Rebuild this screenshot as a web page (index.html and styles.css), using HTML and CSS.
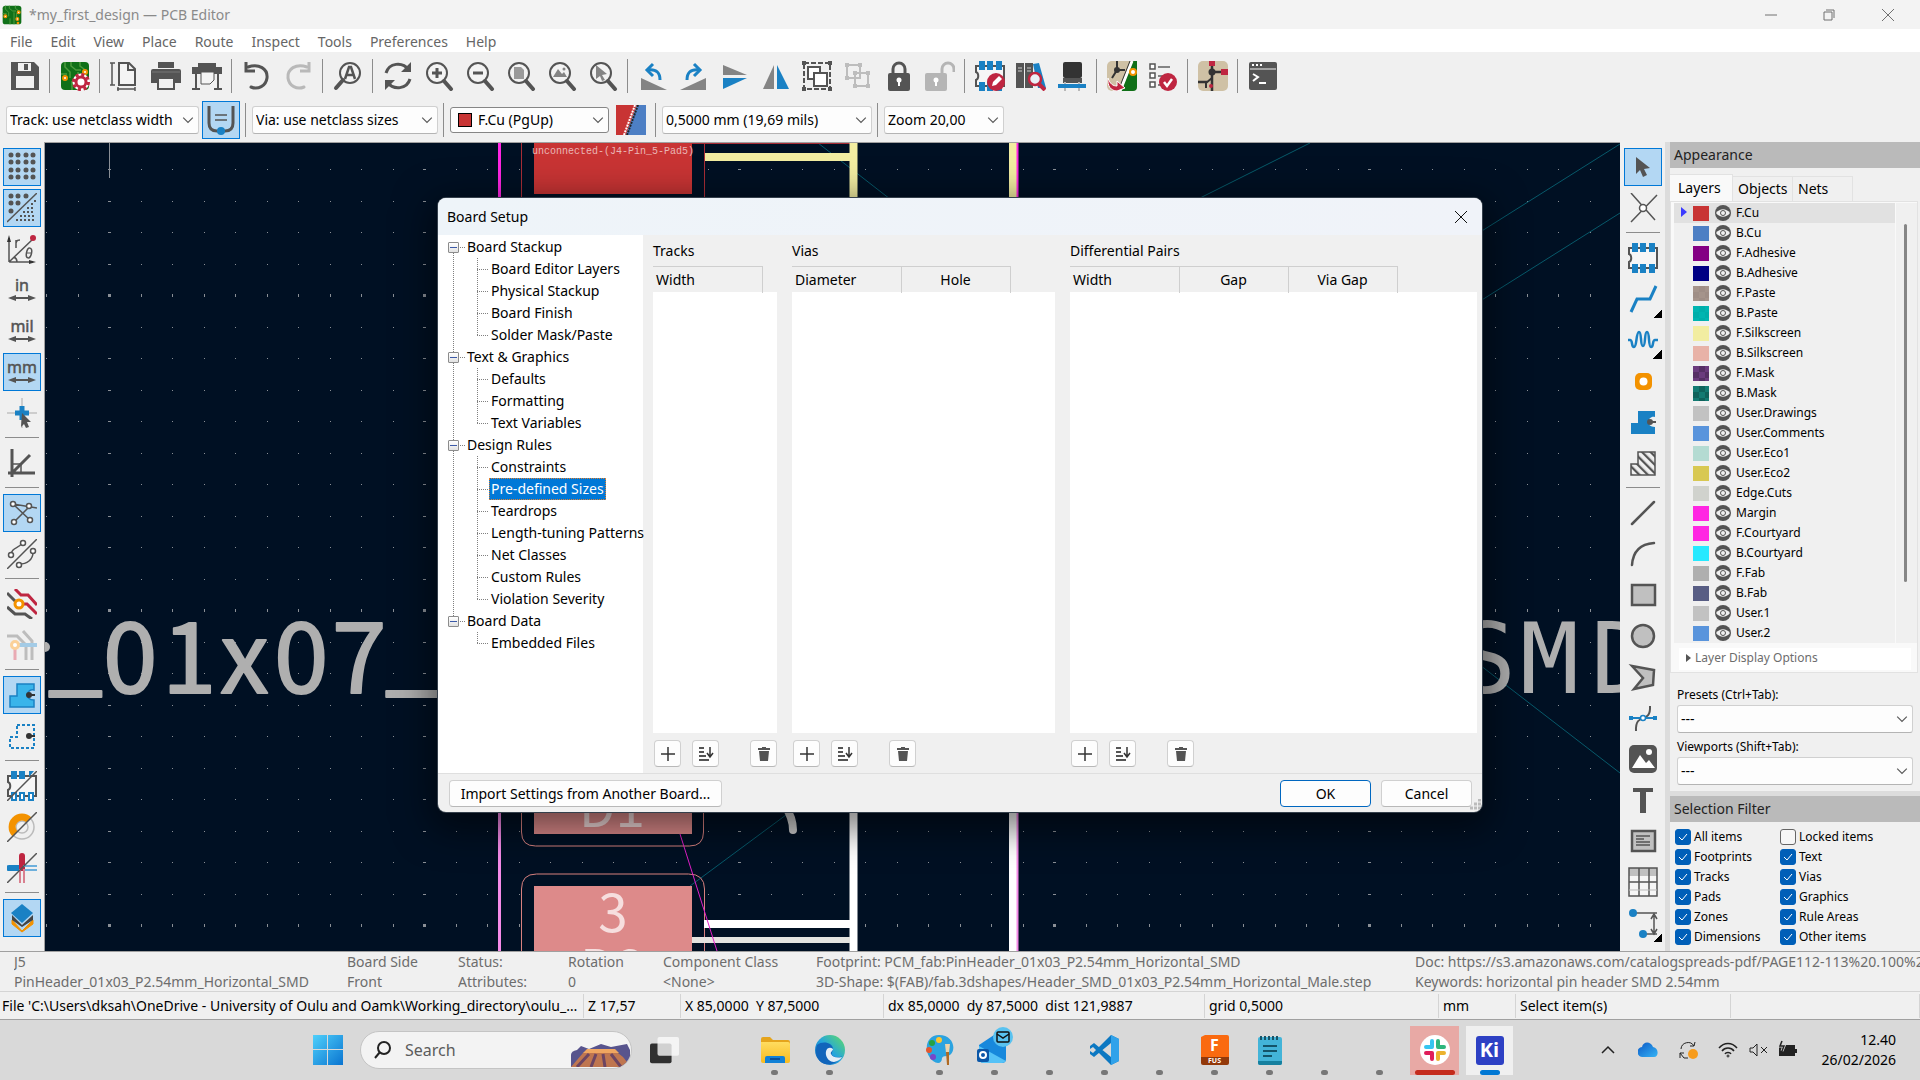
FILE: index.html
```html
<!DOCTYPE html>
<html lang="en">
<head>
<meta charset="utf-8">
<title>*my_first_design — PCB Editor</title>
<link rel="stylesheet" href="styles.css">
</head>
<body>
<svg class="sprite" aria-hidden="true">
<defs>
<linearGradient id="g-win" x1="0" y1="0" x2="1" y2="1"><stop offset="0" stop-color="#4fd0fb"/><stop offset="1" stop-color="#0a74d0"/></linearGradient>
<linearGradient id="g-folder" x1="0" y1="0" x2="0" y2="1"><stop offset="0" stop-color="#ffdc60"/><stop offset="1" stop-color="#f9bb1e"/></linearGradient>
<linearGradient id="g-edge" x1="0" y1="1" x2="1" y2="0"><stop offset="0" stop-color="#0b5cb8"/><stop offset=".5" stop-color="#25a5dc"/><stop offset="1" stop-color="#62de62"/></linearGradient>
<linearGradient id="g-cloud" x1="0" y1="0" x2="1" y2="1"><stop offset="0" stop-color="#0c58c6"/><stop offset="1" stop-color="#35b4f5"/></linearGradient>
<pattern id="p-hatch" width="6" height="6" patternUnits="userSpaceOnUse" patternTransform="rotate(-45)"><path d="M1 0v6" stroke="#545454" stroke-width="2.500"/></pattern>
</defs>
<symbol id="board" viewBox="0 0 30 30"><rect x="1" y="1" width="28" height="28" rx="4" fill="#107018"/><path d="M5 1v5l5 5v6M11 1v4l5 4h5M20 1v4l4 3v5M1 13h6M18 11v18M12 20v9M22 12v7" fill="none" stroke="#4c9a3d" stroke-width="1.500"/><g fill="#fff" stroke="#f39200" stroke-width="2"><circle cx="5" cy="17" r="2"/><circle cx="25" cy="11" r="2"/><circle cx="23" cy="21" r="2"/><circle cx="24" cy="27" r="1"/></g></symbol>
<symbol id="save" viewBox="0 0 30 30"><path d="M1 1h23l5 5v23H1z" fill="#545454"/><path d="M8 2h13v8H8z" fill="#f0f0f0"/><path d="M14 3h4v6h-4z" fill="#545454"/><path d="M6 15h18v12H6z" fill="#f0f0f0"/></symbol>
<symbol id="gear" viewBox="0 0 30 30"><use href="#board"/><g fill="none" stroke="#bf2641"><circle cx="21" cy="21" r="5" stroke="#fff" stroke-width="7"/><circle cx="21" cy="21" r="5" stroke-width="3"/><circle cx="21" cy="21" r="7.500" stroke-width="3" stroke-dasharray="3.200 2.690"/></g><circle cx="21" cy="21" r="3" fill="#fff"/></symbol>
<symbol id="page" viewBox="0 0 30 30"><path d="M9 2h10l6 6v16H9zM18 2v7h7" fill="#f4f4f4" stroke="#545454" stroke-width="2"/><path d="M0 2h5M0 24h5M2 2v22M7 28h18M8 26v4M25 26v4" stroke="#545454" stroke-width="1.500" fill="none"/></symbol>
<symbol id="print" viewBox="0 0 30 30"><path d="M7 1h16v6H7z" fill="#545454"/><path d="M2 8h26a2 2 0 0 1 2 2v12H0V10a2 2 0 0 1 2-2z" fill="#545454"/><path d="M7 17h16v11H7z" fill="#f0f0f0" stroke="#545454" stroke-width="2"/><path d="M1 11h28" stroke="#777"/></symbol>
<symbol id="plot" viewBox="0 0 30 30"><path d="M6 2h18v4H6zM0 6h30v7H0zM3 13h2v15H3zM25 13h2v15h-2zM0 27h8v2H0zM22 27h8v2h-8z" fill="#545454"/><path d="M9 11h13v8l-4 4H9z" fill="#f4f4f4" stroke="#545454"/></symbol>
<symbol id="undo2" viewBox="0 0 30 30"><path d="M6 6C17 2 26 8 25 17c-1 8-9 12-16 9" fill="none" stroke="#545454" stroke-width="3" stroke-linecap="round"/><path d="M4 1v9h9" fill="none" stroke="#545454" stroke-width="3"/></symbol>
<symbol id="find" viewBox="0 0 30 30"><circle cx="17" cy="12" r="10" fill="#f3f3f3" stroke="#545454" stroke-width="2"/><path d="M10 19l-7 8" stroke="#545454" stroke-width="4" stroke-linecap="round"/><path d="M12 18l4-12h2l4 12M14 14h6" fill="none" stroke="#545454" stroke-width="2.500"/></symbol>
<symbol id="refresh" viewBox="0 0 30 30"><path d="M3 12C6 2 19 0 26 9M27 18C24 28 11 30 4 21" fill="none" stroke="#545454" stroke-width="3"/><path d="M28 1v10H18zM2 29V19h10z" fill="#545454"/></symbol>
<symbol id="lens" viewBox="0 0 30 30"><circle cx="13" cy="12" r="10" fill="#f3f3f3" stroke="#545454" stroke-width="2"/><path d="M20 20l7 8" stroke="#545454" stroke-width="4" stroke-linecap="round"/></symbol>
<symbol id="zin" viewBox="0 0 30 30"><use href="#lens"/><path d="M13 7v10M8 12h10" stroke="#545454" stroke-width="3"/></symbol>
<symbol id="zout" viewBox="0 0 30 30"><use href="#lens"/><path d="M8 12h10" stroke="#545454" stroke-width="3"/></symbol>
<symbol id="zpage" viewBox="0 0 30 30"><use href="#lens"/><path d="M8 6h7l3 3v9H8z" fill="#9a9a9a"/></symbol>
<symbol id="zobj" viewBox="0 0 30 30"><use href="#lens"/><path d="M6 16l5-8 4 5 2-2 3 5z" fill="#848484"/><circle cx="17" cy="8" r="1.500" fill="#848484"/></symbol>
<symbol id="zsel" viewBox="0 0 30 30"><use href="#lens"/><path d="M8 4l11 9-5 1 3 5-3 1-2-5-4 3z" fill="#848484"/></symbol>
<symbol id="rotl" viewBox="0 0 30 30"><path d="M3 17v12h26z" fill="#848484"/><path d="M10 9c9-1 12 3 12 10" fill="none" stroke="#1a81c4" stroke-width="3"/><path d="M15 3L9 9l6 6" fill="none" stroke="#1a81c4" stroke-width="3"/></symbol>
<symbol id="flip" viewBox="0 0 30 30"><path d="M3 4l24 10H3z" fill="#848484"/><path d="M3 17h24L3 28z" fill="#1a81c4"/></symbol>
<symbol id="mirror" viewBox="0 0 30 30"><path d="M13 4v24H2z" fill="#848484"/><path d="M16 4v24h12z" fill="#1a81c4"/></symbol>
<symbol id="group" viewBox="0 0 30 30"><path d="M2 2h26v26H2z" fill="none" stroke="#545454" stroke-width="2" stroke-dasharray="5 2"/><path d="M0 0h4v4H0zM26 0h4v4h-4zM0 26h4v4H0zM26 26h4v4h-4z" fill="#545454"/><path d="M6 6h12v12H6z" fill="#fff" stroke="#545454" stroke-width="2"/><path d="M12 12h13v13H12z" fill="#fff" stroke="#545454" stroke-width="2"/></symbol>
<symbol id="ungroup" viewBox="0 0 30 30"><path d="M4 4h13v13H4zM12 12h13v13H12z" fill="#f0f0f0" stroke="#bdbdbd" stroke-width="2"/><path d="M2 2h4v4H2zM15 2h4v4h-4zM2 15h4v4H2zM10 10h4v4h-4zM23 10h4v4h-4zM10 23h4v4h-4zM23 23h4v4h-4z" fill="#bdbdbd"/></symbol>
<symbol id="lock" viewBox="0 0 30 30"><path d="M9 14V8a6 6 0 0 1 12 0v6" fill="none" stroke="#545454" stroke-width="3"/><rect x="4" y="12" width="22" height="18" rx="2" fill="#545454"/><circle cx="15" cy="19" r="2.500" fill="#fff"/><path d="M14 19h2v6h-2z" fill="#fff"/></symbol>
<symbol id="unlock" viewBox="0 0 30 30"><path d="M17 14V8a6 6 0 0 1 12 0v3" fill="none" stroke="#b5b5b5" stroke-width="3"/><rect x="0" y="12" width="22" height="18" rx="2" fill="#b5b5b5"/><circle cx="11" cy="19" r="2.500" fill="#fff"/><path d="M10 19h2v6h-2z" fill="#fff"/></symbol>
<symbol id="fp" viewBox="0 0 30 30"><path d="M1 5h28v20H1v-6c3-1 3-7 0-8z" fill="#f6f6f6" stroke="#545454" stroke-width="2"/><path d="M4 0h6v9H4zM12 0h6v9h-6zM21 0h6v9h-6zM4 21h6v9H4zM12 21h6v9h-6zM21 21h6v9h-6z" fill="#1a81c4"/></symbol>
<symbol id="fpedit" viewBox="0 0 30 30"><use href="#fp"/><circle cx="21" cy="21" r="9" fill="#bf2641"/><path d="M17 25l1-4 6-6 3 3-6 6z" fill="#fff"/></symbol>
<symbol id="lib" viewBox="0 0 30 30"><path d="M0 2h8v25H0zM9 2h8v25H9z" fill="#545454"/><path d="M17 3l6-1 7 25h-8z" fill="#1a81c4"/><path d="M2 7h4M2 10h4M11 7h4M11 10h4" stroke="#ccc"/><circle cx="19" cy="18" r="6" fill="#e9f1f7" stroke="#bf2641" stroke-width="2.500"/><path d="M23 23l6 6" stroke="#bf2641" stroke-width="4"/></symbol>
<symbol id="v3d" viewBox="0 0 30 30"><rect x="6" y="1" width="19" height="16" rx="2" fill="#333"/><path d="M6 17h19v5H6z" fill="#545454"/><path d="M8 21v9M22 21v9" stroke="#b8b8b8" stroke-width="2"/><path d="M1 23h28v4H1z" fill="#1a81c4"/></symbol>
<symbol id="updpcb" viewBox="0 0 30 30"><rect width="30" height="30" rx="5" fill="#cfc1a5"/><path d="M14 30L26 0h4v26q0 4-4 4z" fill="#107018"/><path d="M10 0v9l-5 8M10 9h8" stroke="#333" stroke-width="2" fill="none"/><circle cx="10" cy="9" r="3" fill="#333"/><path d="M25 0L13 30" stroke="#fff" stroke-width="3"/><path d="M23 0L11 30" stroke="#333" stroke-width="1"/><circle cx="26" cy="11" r="3" fill="#fff" stroke="#f39200" stroke-width="2"/><path d="M1 17c2 6 5 8 9 8v-5l8 7-8 3C4 30 0 25 1 17z" fill="#bf2641" stroke="#fff"/></symbol>
<symbol id="drc" viewBox="0 0 30 30"><path d="M2 3h5v5H2zM2 12h5v5H2zM2 21h5v5H2z" fill="#fff" stroke="#545454" stroke-width="1.500"/><path d="M10 6h12M10 15h8M10 24h6" stroke="#848484" stroke-width="2"/><circle cx="20" cy="21" r="9" fill="#bf2641"/><path d="M16 21l3 4 5-7" fill="none" stroke="#fff" stroke-width="2.500"/></symbol>
<symbol id="sch" viewBox="0 0 30 30"><rect width="30" height="30" rx="5" fill="#cfc1a5"/><path d="M14 0v21M14 11h10M0 21h9M14 20v10" stroke="#333" stroke-width="2.500" fill="none"/><path d="M14 11v6l-6 5v5" stroke="#333" stroke-width="2" fill="none"/><circle cx="14" cy="11" r="3.500" fill="#333"/><path d="M11 0h6v5h-6zM23 8h7v6h-7z" fill="#bf2641"/><circle cx="13" cy="25" r="2" fill="#bf2641"/></symbol>
<symbol id="term" viewBox="0 0 30 30"><rect x="1" y="1" width="28" height="28" rx="2" fill="#545454"/><path d="M2 8h26" stroke="#f0f0f0"/><path d="M4 4h2M8 4h2M12 4h2" stroke="#fff" stroke-width="2"/><path d="M5 13l5 3-5 4M11 22h7" fill="none" stroke="#fff" stroke-width="2"/></symbol>
<symbol id="trackw" viewBox="0 0 30 30"><path d="M3 1v17c0 6 3 8 8 8h8c5 0 8-2 8-8V1" fill="none" stroke="#545454" stroke-width="3"/><path d="M9 10h12M9 15h12" stroke="#545454" stroke-width="1.500"/><circle cx="15" cy="26" r="4" fill="#1a81c4"/></symbol>
<symbol id="pair" viewBox="0 0 30 30"><path d="M0 0h21L10 30H0z" fill="#c83434"/><path d="M21 0h9v30H10z" fill="#4d7fc4"/><path d="M19 0L8 30" stroke="#fff" stroke-width="2" stroke-dasharray="2 1"/><path d="M22 0L11 30" stroke="#222" stroke-width="2" stroke-dasharray="2 1"/></symbol>
<symbol id="grid" viewBox="0 0 30 30"><path d="M4 3h0M11 3h0M19 3h0M26 3h0M4 10h0M11 10h0M19 10h0M26 10h0M4 18h0M11 18h0M19 18h0M26 18h0M4 25h0M11 25h0M19 25h0M26 25h0" stroke="#545454" stroke-width="5" stroke-linecap="round"/></symbol>
<symbol id="gridov" viewBox="0 0 30 30"><path d="M4 3h0M11 3h0M19 3h0M4 10h0M11 10h0M4 18h0" stroke="#545454" stroke-width="5" stroke-linecap="round"/><path d="M0 29L30 0" stroke="#545454" stroke-width="1.500"/><path d="M9 27h19M13 23h15M16 19h12M20 15h8M24 11h4M27 8h2" stroke="#545454" stroke-width="2" stroke-dasharray="2 2"/></symbol>
<symbol id="polar" viewBox="0 0 30 30"><path d="M2 28V4M2 28h24M2 28L26 5M7 23c2 1 3 3 3 5" fill="none" stroke="#545454" stroke-width="1.500"/><path d="M0 8l2-7 2 7zM22 26l7 2-7 2z" fill="#333"/><circle cx="26" cy="4" r="3" fill="#bf2641"/><path d="M9 6v8M9 9c1-3 2-3 4-3" fill="none" stroke="#545454" stroke-width="1.500"/><ellipse cx="22" cy="19" rx="2.500" ry="5" fill="none" stroke="#545454" stroke-width="1.500" transform="rotate(12 22 19)"/><path d="M19 19h6" stroke="#545454"/></symbol>
<symbol id="arrow2" viewBox="0 0 30 8"><path d="M6 4h18" stroke="#545454" stroke-width="2"/><path d="M1 4l8-3v6zM29 4l-8-3v6z" fill="#545454"/></symbol>
<symbol id="cursor" viewBox="0 0 30 30"><path d="M15 0v30M0 15h30" stroke="#aaa"/><path d="M15 8v14M8 15h14" stroke="#1a81c4" stroke-width="5"/><path d="M15 15l9 9-4 0 2 5-3 1-2-4-3 3z" fill="#545454"/></symbol>
<symbol id="angle" viewBox="0 0 30 30"><path d="M5 1v28M1 25h27M5 25L23 7" stroke="#545454" stroke-width="3"/><path d="M6 16h8v8" fill="none" stroke="#545454" stroke-width="1.500"/></symbol>
<symbol id="rats" viewBox="0 0 30 30"><path d="M6 6l17 16M7 24L22 9M6 6l24 4" stroke="#545454" stroke-width="1.500"/><g fill="#fff" stroke="#545454" stroke-width="1.500"><circle cx="6" cy="6" r="2.500"/><circle cx="22" cy="8" r="2.500"/><circle cx="7" cy="24" r="2.500"/><circle cx="23" cy="22" r="2.500"/></g></symbol>
<symbol id="curverats" viewBox="0 0 30 30"><path d="M0 30L30 0M4 15C6 7 11 11 15 4M12 25c8 0 14-4 14-12" fill="none" stroke="#545454" stroke-width="1.500"/><g fill="#fff" stroke="#545454" stroke-width="1.500"><circle cx="4" cy="16" r="2.500"/><circle cx="16" cy="4" r="2.500"/><circle cx="12" cy="26" r="2.500"/><circle cx="26" cy="12" r="2.500"/></g></symbol>
<symbol id="hicon" viewBox="0 0 30 30"><path d="M0 4l11 11M0 18l8 7h10l7 5" fill="none" stroke="#545454" stroke-width="3"/><path d="M8 0l6 6h7l9 10M14 15h6l10 10" fill="none" stroke="#bf2641" stroke-width="3"/><circle cx="12" cy="15" r="4" fill="#fff" stroke="#f39200" stroke-width="3"/></symbol>
<symbol id="netfade" viewBox="0 0 30 30"><path d="M0 6h10l9 9v15M16 1l9 10v19" fill="none" stroke="#bdbdbd" stroke-width="3"/><path d="M8 15v15" stroke="#e9aab3" stroke-width="3"/><path d="M8 15h22" stroke="#a3cbe6" stroke-width="4"/><circle cx="8" cy="15" r="3.500" fill="#fff" stroke="#fbd199" stroke-width="3"/></symbol>
<symbol id="zone" viewBox="0 0 30 30"><path d="M10 4h17v6c-7-2-10 10 0 10v7H3V16h7z" fill="#39b4ea" stroke="#1a81c4" stroke-width="1.500"/><circle cx="22" cy="15" r="3" fill="#333"/><path d="M22 15h6" stroke="#333" stroke-width="2"/></symbol>
<symbol id="zoneout" viewBox="0 0 30 30"><path d="M10 4h17v23H3V16h7z" fill="none" stroke="#1a81c4" stroke-width="2" stroke-dasharray="3 2"/><circle cx="22" cy="15" r="3" fill="#333"/><path d="M22 15h6" stroke="#333" stroke-width="2"/></symbol>
<symbol id="padsk" viewBox="0 0 30 30"><path d="M1 5h28v20H1v-6c3-1 3-7 0-8z" fill="#f6f6f6" stroke="#545454" stroke-width="2"/><path d="M4 0h6v8H4zM12 0h6v8h-6zM22 0h5l-5 6z" fill="#1a81c4"/><path d="M5 22h4v7H5zM13 22h4v7h-4zM22 22h4v7h-4z" fill="#fff" stroke="#1a81c4" stroke-width="2"/><path d="M0 30L30 0" stroke="#545454" stroke-width="1.500"/></symbol>
<symbol id="viask" viewBox="0 0 30 30"><circle cx="15" cy="15" r="12" fill="none" stroke="#bbb" stroke-width="1.500"/><circle cx="15" cy="15" r="6" fill="none" stroke="#bbb" stroke-width="1.500"/><path d="M8 22A9 9 0 1 1 22 8" fill="none" stroke="#f39200" stroke-width="7"/><path d="M0 30L30 0" stroke="#545454" stroke-width="1.500"/></symbol>
<symbol id="tracksk" viewBox="0 0 30 30"><path d="M2 15h13" stroke="#1a81c4" stroke-width="6" stroke-linecap="round"/><path d="M15 3v12" stroke="#bf2641" stroke-width="6" stroke-linecap="round"/><path d="M16 13h14M16 17h14" stroke="#6eb0dc" stroke-width="2"/><path d="M13 16v14M17 16v14" stroke="#d9808f" stroke-width="2"/><path d="M0 30L30 0" stroke="#545454" stroke-width="1.500"/></symbol>
<symbol id="layers" viewBox="0 0 30 30"><path d="M5 17l10 11 11-11v4L15 29 5 21z" fill="#f39200" stroke="#f39200"/><path d="M5 12l10 10 11-10v5l-11 7-10-7z" fill="#444"/><path d="M15 1l11 9-11 10L4 10z" fill="#1a81c4"/></symbol>
<symbol id="ptr" viewBox="0 0 30 30"><path d="M8 5l14 11-6 1 3 6-4 2-3-7-4 4z" fill="#545454"/></symbol>
<symbol id="localrat" viewBox="0 0 30 30"><path d="M3 0l24 27M29 2L3 29" stroke="#545454" stroke-width="1.500"/><circle cx="15" cy="15" r="3.500" fill="#fff" stroke="#545454" stroke-width="1.500"/></symbol>
<symbol id="route" viewBox="0 0 30 30"><path d="M3 28l6-13h13l6-13" fill="none" stroke="#1a81c4" stroke-width="3"/></symbol>
<symbol id="tune" viewBox="0 0 30 30"><path d="M0 15h2c3 0 1 7 4 7s2-15 5-15 1 14 4 14 1-14 4-14 1 15 4 15 1-7 4-7h3" fill="none" stroke="#1a81c4" stroke-width="2.500"/></symbol>
<symbol id="via" viewBox="0 0 30 30"><rect x="7" y="7" width="17" height="17" rx="5" fill="#f39200"/><circle cx="15.500" cy="15.500" r="4" fill="#fff"/></symbol>
<symbol id="zonefill" viewBox="0 0 30 30"><path d="M10 4h17v6c-7-2-10 10 0 10v7H3V16h7z" fill="#1a81c4"/><circle cx="22" cy="15" r="3" fill="#545454"/><path d="M22 15h6" stroke="#545454" stroke-width="2"/></symbol>
<symbol id="rulearea" viewBox="0 0 30 30"><path d="M10 4h17v23H3V16h7z" fill="url(#p-hatch)" stroke="#545454" stroke-width="1.500"/></symbol>
<symbol id="line" viewBox="0 0 30 30"><path d="M4 26L26 4" stroke="#545454" stroke-width="2.500" stroke-linecap="round"/></symbol>
<symbol id="arc" viewBox="0 0 30 30"><path d="M4 26C5 12 12 5 26 4" fill="none" stroke="#545454" stroke-width="2.500" stroke-linecap="round"/></symbol>
<symbol id="rect" viewBox="0 0 30 30"><path d="M4 5h23v20H4z" fill="#c0c0c0" stroke="#545454" stroke-width="2.500"/></symbol>
<symbol id="circ" viewBox="0 0 30 30"><circle cx="15" cy="15" r="11" fill="#c0c0c0" stroke="#545454" stroke-width="2.500"/></symbol>
<symbol id="poly" viewBox="0 0 30 30"><path d="M4 4l22 4-1 15-19 4 9-11z" fill="#c0c0c0" stroke="#545454" stroke-width="2.500"/></symbol>
<symbol id="bez" viewBox="0 0 30 30"><path d="M8 28C7 8 23 22 22 3" fill="none" stroke="#545454" stroke-width="2"/><path d="M3 15h24" stroke="#1a81c4" stroke-width="2"/><path d="M1 13h4v4H1zM25 13h4v4h-4z" fill="#1a81c4"/><circle cx="15" cy="15" r="2.500" fill="#fff" stroke="#1a81c4" stroke-width="1.500"/></symbol>
<symbol id="img" viewBox="0 0 30 30"><rect x="1" y="1" width="28" height="28" rx="5" fill="#545454"/><path d="M4 24l8-13 6 8 3-3 6 8z" fill="#fff"/><circle cx="21" cy="8" r="3" fill="#fff"/></symbol>
<symbol id="text" viewBox="0 0 30 30"><path d="M5 3h20v4h-7v21h-6V7H5z" fill="#545454"/></symbol>
<symbol id="tbox" viewBox="0 0 30 30"><path d="M4 5h23v20H4z" fill="#c0c0c0" stroke="#545454" stroke-width="2.500"/><path d="M8 10h14M8 13h8M8 16h14M8 19h14" stroke="#545454" stroke-width="1.500"/></symbol>
<symbol id="table" viewBox="0 0 30 30"><path d="M1 1h28v28H1z" fill="#f6f6f6"/><path d="M1 1h28v8H1z" fill="#c0c0c0"/><path d="M1 1h28v28H1zM1 15h28M11 1v28M21 1v28" fill="none" stroke="#545454" stroke-width="1.500"/><path d="M1 23h28" stroke="#bbb"/></symbol>
<symbol id="dim" viewBox="0 0 30 30"><path d="M5 5h24M16 26h13" stroke="#545454" stroke-width="1.500"/><path d="M26 8v16M23 11l3-5 3 5M23 21l3 5 3-5" stroke="#545454" stroke-width="1.500" fill="none"/><circle cx="5" cy="5" r="4" fill="#1a81c4"/><circle cx="15" cy="26" r="4" fill="#1a81c4"/></symbol>
<symbol id="eye" viewBox="0 0 16 16"><circle cx="8" cy="8" r="8" fill="#545454"/><path d="M1 8c4-5 10-5 14 0-4 5-10 5-14 0z" fill="#f0f0f0"/><circle cx="8" cy="8" r="2.500" fill="#f0f0f0" stroke="#545454"/></symbol>
<symbol id="chev" viewBox="0 0 10 10"><path d="M1 3l4 4 4-4" fill="none" stroke="#5a5a5a"/></symbol>
<symbol id="plus" viewBox="0 0 16 16"><path d="M8 1v14M1 8h14" stroke="#333" stroke-width="1.500"/></symbol>
<symbol id="sort" viewBox="0 0 16 16"><path d="M1 2h5M1 6h5M1 10h7M1 14h10" stroke="#545454" stroke-width="2"/><path d="M12 1v9M9 7l3 4 3-4" fill="none" stroke="#333" stroke-width="1.500"/></symbol>
<symbol id="trash" viewBox="0 0 16 16"><path d="M2 2h4V1h4v1h4v2H2zM3 5h10l-1 10H4z" fill="#545454"/></symbol>
<symbol id="win" viewBox="0 0 30 30"><path d="M0 0h14v14H0zM15 0h15v14H15zM0 15h14v15H0zM15 15h15v15H15z" fill="url(#g-win)"/></symbol>
<symbol id="folder" viewBox="0 0 30 30"><path d="M1 4q0-2 2-2h7l3 3h15q2 0 2 2v18H1z" fill="#e5a41c"/><path d="M1 7h27q2 0 2 2v17q0 2-2 2H3q-2 0-2-2z" fill="url(#g-folder)"/><path d="M5 28v-5q0-2 2-2h16q2 0 2 2v5z" fill="#1281d6"/><path d="M10 24h10" stroke="#0b4f97" stroke-width="2"/></symbol>
<symbol id="edge" viewBox="0 0 30 30"><circle cx="15" cy="15" r="15" fill="url(#g-edge)"/><path d="M2 10C8 5 18 8 18 14c0 3-2 3-1 6 2 3 8 3 10 1-5 8-12 9-17 8C3 27-1 19 2 10z" fill="#1165bb"/><path d="M18 14c-4-3-8 0-7 6 1 4 4 7 8 7 4-1 6-2 8-5-4 1-9 1-11-3-1-2 2-3 2-5z" fill="#e4eef6"/></symbol>
<symbol id="paint" viewBox="0 0 30 30"><path d="M14 0C28 0 32 14 25 20c-4 2-6 0-8 3 0 6-5 6-9 3C-2 18 0 0 14 0z" fill="#2ba3e0"/><circle cx="7" cy="8" r="3" fill="#25a244"/><circle cx="14" cy="5" r="3" fill="#ffc52e"/><circle cx="4" cy="15" r="3" fill="#e4572e"/><circle cx="8" cy="22" r="3" fill="#7746c9"/><path d="M20 9h5l-1 9h-3z" fill="#ecd3ab"/><path d="M21 17h3v13h-2z" fill="#b06a22"/></symbol>
<symbol id="outlook" viewBox="0 0 38 38"><path d="M3 18L18 8l12 7v17q0 4-4 4H8q-5 0-5-5z" fill="#1788dc"/><path d="M3 19l27 15q-2 2-4 2H8q-5 0-5-5z" fill="#55c2f7"/><rect x="1" y="22" width="12" height="13" rx="2" fill="#0b57a8"/><circle cx="7" cy="28" r="3" fill="none" stroke="#fff" stroke-width="2"/><circle cx="27" cy="10" r="10" fill="#59c2f0"/><rect x="21" y="5" width="12" height="10" rx="1" fill="none" stroke="#111" stroke-width="1.500"/><path d="M21 7l6 4 6-4" fill="none" stroke="#111" stroke-width="1.500"/></symbol>
<symbol id="code" viewBox="0 0 30 30"><path d="M21 0l8 4v22l-8 4L3 12l-3 2v-3l4-3 17 14V8L4 22l-4-3v-3l3 2z" fill="#0c78c2"/><path d="M21 0l8 4v22l-8 4z" fill="#30a2ea"/></symbol>
<symbol id="fusion" viewBox="0 0 28 30"><path d="M0 2l4-2h22q2 0 2 2v20H0z" fill="#fa6a10"/><path d="M0 22h28v6q0 2-2 2H2q-2 0-2-2z" fill="#93390a"/></symbol>
<symbol id="note" viewBox="0 0 24 30"><rect y="2" width="24" height="28" rx="2" fill="#43b4d8"/><path d="M0 26h24v2q0 2-2 2H2q-2 0-2-2z" fill="#16809f"/><path d="M2 3h20" stroke="#175468" stroke-width="4" stroke-dasharray="2 2"/><path d="M5 11h14M5 16h14M5 21h9" stroke="#145469" stroke-width="2"/></symbol>
<symbol id="slack" viewBox="0 0 30 30"><circle cx="15" cy="15" r="15" fill="#fff"/><g stroke-width="4" stroke-linecap="round"><path d="M12 6v6M6 12h6" stroke="#36c5f0"/><path d="M18 6v6M18 12h6" stroke="#2eb67d"/><path d="M18 18v6M18 18h6" stroke="#ecb22e"/><path d="M12 18v6M6 18h6" stroke="#e01e5a"/></g></symbol>
<symbol id="tview" viewBox="0 0 32 30"><rect y="8" width="23" height="21" rx="2" fill="#303030"/><rect x="8" y="1" width="23" height="20" rx="2" fill="#fafafa" fill-opacity=".8"/></symbol>
<symbol id="pic" viewBox="0 0 62 24"><path d="M2 24V12q0-4 6-5l4-4 8 3 12-5 10 3 16-3 3 6v17z" fill="#58548d"/><path d="M2 24l12-14 8-4h22l10 8 8 10z" fill="#bf7650"/><path d="M18 6h28l4 4H14z" fill="#f0a660"/><path d="M8 24l12-13M22 24l5-13M36 24l-2-13M52 24L42 11" stroke="#6d4562" stroke-width="3"/></symbol>
</svg>

<header class="titlebar"><svg class="i20"><use href="#board"/></svg><h1>*my_first_design — PCB Editor</h1>
<div class="winctl"><button aria-label="Minimise"><svg viewBox="0 0 14 14"><path d="M1 7h12"/></svg></button><button aria-label="Restore"><svg viewBox="0 0 14 14"><path d="M2 4h8v8H2zM4 2h8v8"/></svg></button><button aria-label="Close window"><svg viewBox="0 0 14 14"><path d="M1 1l12 12M13 1L1 13"/></svg></button></div></header>
<nav class="menu"><button>File</button><button>Edit</button><button>View</button><button>Place</button><button>Route</button><button>Inspect</button><button>Tools</button><button>Preferences</button><button>Help</button></nav>
<div class="bar tools">
<button aria-label="Save"><svg><use href="#save"/></svg></button><i></i>
<button aria-label="Board setup"><svg><use href="#gear"/></svg></button><i></i>
<button aria-label="Page settings"><svg><use href="#page"/></svg></button><button aria-label="Print"><svg><use href="#print"/></svg></button><button aria-label="Plot"><svg><use href="#plot"/></svg></button><i></i>
<button aria-label="Undo"><svg><use href="#undo2"/></svg></button><button aria-label="Redo" class="dis flipx"><svg><use href="#undo2"/></svg></button><i></i>
<button aria-label="Find"><svg><use href="#find"/></svg></button><i></i>
<button aria-label="Refresh"><svg><use href="#refresh"/></svg></button><button aria-label="Zoom in"><svg><use href="#zin"/></svg></button><button aria-label="Zoom out"><svg><use href="#zout"/></svg></button><button aria-label="Zoom to page"><svg><use href="#zpage"/></svg></button><button aria-label="Zoom to objects"><svg><use href="#zobj"/></svg></button><button aria-label="Zoom to selection"><svg><use href="#zsel"/></svg></button><i></i>
<button aria-label="Rotate left"><svg><use href="#rotl"/></svg></button><button aria-label="Rotate right" class="flipx"><svg><use href="#rotl"/></svg></button><button aria-label="Flip"><svg><use href="#flip"/></svg></button><button aria-label="Mirror"><svg><use href="#mirror"/></svg></button><button aria-label="Group"><svg><use href="#group"/></svg></button><button aria-label="Ungroup"><svg><use href="#ungroup"/></svg></button><button aria-label="Lock"><svg><use href="#lock"/></svg></button><button aria-label="Unlock"><svg><use href="#unlock"/></svg></button><i></i>
<button aria-label="Footprint editor"><svg><use href="#fpedit"/></svg></button><button aria-label="Footprint browser"><svg><use href="#lib"/></svg></button><button aria-label="3D viewer"><svg><use href="#v3d"/></svg></button><i></i>
<button aria-label="Update from schematic"><svg><use href="#updpcb"/></svg></button><button aria-label="Design rules check"><svg><use href="#drc"/></svg></button><i></i>
<button aria-label="Schematic"><svg><use href="#sch"/></svg></button><i></i>
<button aria-label="Scripting console"><svg><use href="#term"/></svg></button>
</div>
<div class="bar options">
<span class="combo w-track"><select aria-label="Track width"><option>Track: use netclass width</option></select><svg><use href="#chev"/></svg></span>
<button class="on" aria-label="Use existing track width"><svg><use href="#trackw"/></svg></button><i></i>
<span class="combo w-via"><select aria-label="Via size"><option>Via: use netclass sizes</option></select><svg><use href="#chev"/></svg></span><i></i>
<span class="combo layer w-layer"><b></b><select aria-label="Active layer"><option>F.Cu (PgUp)</option></select><svg><use href="#chev"/></svg></span>
<button class="pair" aria-label="Layer pair"><svg><use href="#pair"/></svg></button><i></i>
<span class="combo w-grid"><select aria-label="Grid"><option>0,5000 mm (19,69 mils)</option></select><svg><use href="#chev"/></svg></span><i></i>
<span class="combo w-zoom"><select aria-label="Zoom"><option>Zoom 20,00</option></select><svg><use href="#chev"/></svg></span>
</div>

<main>
<div class="side">
<button class="on" aria-label="Grid"><svg><use href="#grid"/></svg></button><button class="on" aria-label="Grid overrides"><svg><use href="#gridov"/></svg></button><button aria-label="Polar coordinates"><svg><use href="#polar"/></svg></button>
<button class="unit">in<svg><use href="#arrow2"/></svg></button><button class="unit">mil<svg><use href="#arrow2"/></svg></button><button class="unit on">mm<svg><use href="#arrow2"/></svg></button>
<button aria-label="Crosshair"><svg><use href="#cursor"/></svg></button><i></i><button aria-label="Angle mode"><svg><use href="#angle"/></svg></button><i></i>
<button class="on" aria-label="Ratsnest"><svg><use href="#rats"/></svg></button><button aria-label="Curved ratsnest"><svg><use href="#curverats"/></svg></button><i></i>
<button aria-label="High contrast"><svg><use href="#hicon"/></svg></button><button aria-label="Net colours"><svg><use href="#netfade"/></svg></button><i></i>
<button class="on" aria-label="Zone fill"><svg><use href="#zone"/></svg></button><button aria-label="Zone outline"><svg><use href="#zoneout"/></svg></button><i></i>
<button aria-label="Sketch pads"><svg><use href="#padsk"/></svg></button><button aria-label="Sketch vias"><svg><use href="#viask"/></svg></button><button aria-label="Sketch tracks"><svg><use href="#tracksk"/></svg></button><i></i>
<button class="on" aria-label="Appearance manager"><svg><use href="#layers"/></svg></button>
</div>
<svg class="board" role="img" aria-label="Board canvas">
<defs><path id="dots" d="M32 .5h1M63 .5h1M95 .5h1M126 .5h1M158 .5h1M189 .5h1M221 .5h1M252 .5h1M284 .5h1M0 .5h2M314 .5h1" stroke="#8a8f96"/>
<pattern id="gridp" x="109" y="295" width="315" height="315" patternUnits="userSpaceOnUse"><use href="#dots" y="32"/><use href="#dots" y="63"/><use href="#dots" y="95"/><use href="#dots" y="126"/><use href="#dots" y="158"/><use href="#dots" y="189"/><use href="#dots" y="221"/><use href="#dots" y="252"/><use href="#dots" y="284"/><use href="#dots"/><use href="#dots" y="1"/><use href="#dots" y="314"/></pattern></defs>
<g transform="translate(-45 -143)">
<rect x="45" y="143" width="3000" height="2000" fill="#001023"/><rect x="45" y="143" width="3000" height="2000" fill="url(#gridp)"/>
<path d="M109.500 143v35" stroke="#8a8f96"/>
<g stroke="#07596a" fill="none"><path d="M818 143l90 70M1310 143l-140 70M1620 144l-170 107M1620 213l-170 107M1450 642l170 131M790 812L690 886"/></g>
<circle cx="45" cy="647" r="5" fill="#afafaf"/>
<g class="fab"><text x="48" y="683">_</text><text x="103 162 220 274 332" y="693">01x07</text><text x="385" y="683">_</text></g>
<text class="fab mono" x="1457 1520 1591" y="693">SMD</text>
<path d="M499.500 143v60" stroke="#ff26e2" stroke-width="3"/><path d="M499.500 800v1200" stroke="#f58be8" stroke-width="3"/>
<path d="M521.500 143v60M704.500 143v60M692 143.500h158" fill="none" stroke="#a82d36"/>
<rect x="534" y="143" width="158" height="51" fill="#c83434"/><text class="net" x="613" y="154">unconnected-(J4-Pin_5-Pad5)</text>
<path d="M705 157h146M853.500 143v60M1013 143v60" fill="none" stroke="#f2eda1" stroke-width="8"/><path d="M1017.500 143v60" stroke="#ff26e2" stroke-width="2"/>
<path d="M521.500 800v32q0 14 14 14h154q14 0 14-14v-32M521.500 2000V889q0-15 15-15h152q16 0 16 15v1111" fill="none" stroke="#d8817f"/>
<path d="M534 800h158v34H534zM534 886h158v1100H534z" fill="#dd8a8a"/>
<g class="pad"><text x="612" y="827">D1</text><text x="613" y="932">3</text><text x="613" y="988">D2</text></g>
<path d="M704 924h148M853.500 800v1200M1013 800v1200" stroke="#fff" stroke-width="8"/><path d="M692 940h158" stroke="#e3e3df" stroke-width="6"/><path d="M1017.500 800v1200" stroke="#f58be8" stroke-width="2"/>
<path d="M680 834l37 117" stroke="#e11fc8"/><path d="M785 806q8 12 8 24" fill="none" stroke="#d0d0d0" stroke-width="8" stroke-linecap="round"/>
</g>
</svg>
<div class="side right">
<button class="on" aria-label="Select"><svg><use href="#ptr"/></svg></button><button aria-label="Local ratsnest"><svg><use href="#localrat"/></svg></button><i></i>
<button aria-label="Add footprint"><svg><use href="#fp"/></svg></button><button class="more" aria-label="Route track"><svg><use href="#route"/></svg></button><button class="more" aria-label="Tune length"><svg><use href="#tune"/></svg></button><button aria-label="Add via"><svg><use href="#via"/></svg></button><button aria-label="Add zone"><svg><use href="#zonefill"/></svg></button><button aria-label="Add rule area"><svg><use href="#rulearea"/></svg></button><i></i>
<button aria-label="Line"><svg><use href="#line"/></svg></button><button aria-label="Arc"><svg><use href="#arc"/></svg></button><button aria-label="Rectangle"><svg><use href="#rect"/></svg></button><button aria-label="Circle"><svg><use href="#circ"/></svg></button><button aria-label="Polygon"><svg><use href="#poly"/></svg></button><button aria-label="Bezier"><svg><use href="#bez"/></svg></button><button aria-label="Image"><svg><use href="#img"/></svg></button><button aria-label="Text"><svg><use href="#text"/></svg></button><button aria-label="Text box"><svg><use href="#tbox"/></svg></button><button aria-label="Table"><svg><use href="#table"/></svg></button><button class="more" aria-label="Dimension"><svg><use href="#dim"/></svg></button>
</div>
<aside>
<h2>Appearance</h2>
<div class="tabs"><button class="cur">Layers</button><button>Objects</button><button>Nets</button></div>
<div class="book">
<div class="scroller"><ul class="layers">
<li class="sel"><span style="background:#c83434"></span><svg><use href="#eye"/></svg>F.Cu</li>
<li><span style="background:#4d7fc4"></span><svg><use href="#eye"/></svg>B.Cu</li>
<li><span style="background:#840084"></span><svg><use href="#eye"/></svg>F.Adhesive</li>
<li><span style="background:#000084"></span><svg><use href="#eye"/></svg>B.Adhesive</li>
<li><span class="chk" style="background-color:#a5948b"></span><svg><use href="#eye"/></svg>F.Paste</li>
<li><span class="chk" style="background-color:#00b5b1"></span><svg><use href="#eye"/></svg>B.Paste</li>
<li><span style="background:#f2eda1"></span><svg><use href="#eye"/></svg>F.Silkscreen</li>
<li><span style="background:#e8b2a7"></span><svg><use href="#eye"/></svg>B.Silkscreen</li>
<li><span class="chk strong" style="background-color:#6b3b7d"></span><svg><use href="#eye"/></svg>F.Mask</li>
<li><span class="chk strong" style="background-color:#137a72"></span><svg><use href="#eye"/></svg>B.Mask</li>
<li><span style="background:#c2c2c2"></span><svg><use href="#eye"/></svg>User.Drawings</li>
<li><span style="background:#5994dc"></span><svg><use href="#eye"/></svg>User.Comments</li>
<li><span style="background:#b4dbd2"></span><svg><use href="#eye"/></svg>User.Eco1</li>
<li><span style="background:#d8c852"></span><svg><use href="#eye"/></svg>User.Eco2</li>
<li><span style="background:#d0d2cd"></span><svg><use href="#eye"/></svg>Edge.Cuts</li>
<li><span style="background:#ff26e2"></span><svg><use href="#eye"/></svg>Margin</li>
<li><span style="background:#ff26e2"></span><svg><use href="#eye"/></svg>F.Courtyard</li>
<li><span style="background:#26e9ff"></span><svg><use href="#eye"/></svg>B.Courtyard</li>
<li><span style="background:#afafaf"></span><svg><use href="#eye"/></svg>F.Fab</li>
<li><span style="background:#585d84"></span><svg><use href="#eye"/></svg>B.Fab</li>
<li><span style="background:#c2c2c2"></span><svg><use href="#eye"/></svg>User.1</li>
<li><span style="background:#5994dc"></span><svg><use href="#eye"/></svg>User.2</li>
</ul><div class="track"><div class="thumb"></div></div></div>
<button class="ldo">Layer Display Options</button>
</div>
<div class="presets"><label for="pr">Presets (Ctrl+Tab):</label><span class="combo"><select id="pr"><option>---</option></select><svg><use href="#chev"/></svg></span>
<label for="vp">Viewports (Shift+Tab):</label><span class="combo"><select id="vp"><option>---</option></select><svg><use href="#chev"/></svg></span></div>
<h2 class="second">Selection Filter</h2>
<div class="filter">
<label><input type="checkbox" checked>All items</label><label><input type="checkbox">Locked items</label>
<label><input type="checkbox" checked>Footprints</label><label><input type="checkbox" checked>Text</label>
<label><input type="checkbox" checked>Tracks</label><label><input type="checkbox" checked>Vias</label>
<label><input type="checkbox" checked>Pads</label><label><input type="checkbox" checked>Graphics</label>
<label><input type="checkbox" checked>Zones</label><label><input type="checkbox" checked>Rule Areas</label>
<label><input type="checkbox" checked>Dimensions</label><label><input type="checkbox" checked>Other items</label>
</div>
</aside>
</main>

<section class="info">
<div>J5<br>PinHeader_01x03_P2.54mm_Horizontal_SMD</div><div>Board Side<br>Front</div><div>Status:<br>Attributes:</div><div>Rotation<br>0</div><div>Component Class<br>&lt;None&gt;</div><div>Footprint: PCM_fab:PinHeader_01x03_P2.54mm_Horizontal_SMD<br>3D-Shape: $(FAB)/fab.3dshapes/Header_SMD_01x03_P2.54mm_Horizontal_Male.step</div><div>Doc: https://s3.amazonaws.com/catalogspreads-pdf/PAGE112-113%20.100%20MALE%20HDR.pdf<br>Keywords: horizontal pin header SMD 2.54mm</div>
</section>
<footer class="status"><span>File 'C:\Users\dksah\OneDrive - University of Oulu and Oamk\Working_directory\oulu_design</span><span>Z 17,57</span><span>X 85,0000&nbsp; Y 87,5000</span><span>dx 85,0000&nbsp; dy 87,5000&nbsp; dist 121,9887</span><span>grid 0,5000</span><span>mm</span><span>Select item(s)</span><span></span></footer>

<div class="taskbar">
<button aria-label="Start"><svg class="s30"><use href="#win"/></svg></button>
<label class="search"><svg viewBox="0 0 20 20"><circle cx="11" cy="8" r="6"/><path d="M7 12l-5 6"/></svg><input type="text" placeholder="Search" aria-label="Search"><svg class="pic"><use href="#pic"/></svg></label>
<button aria-label="Task view"><svg class="s30"><use href="#tview"/></svg></button><span></span>
<button class="run" aria-label="File Explorer"><svg class="s30"><use href="#folder"/></svg></button>
<button class="run" aria-label="Edge"><svg class="s30"><use href="#edge"/></svg></button><span></span>
<button class="run" aria-label="Paint"><svg class="s30"><use href="#paint"/></svg></button>
<button class="run" aria-label="Outlook"><svg class="s38"><use href="#outlook"/></svg></button>
<button class="run" aria-label="App"></button>
<button class="run" aria-label="Code"><svg class="s30"><use href="#code"/></svg></button>
<button class="run" aria-label="App"></button>
<button class="run fus" aria-label="Fusion"><svg class="s30"><use href="#fusion"/></svg><b>F</b><small>FUS</small></button>
<button class="run" aria-label="Notepad"><svg class="s30"><use href="#note"/></svg></button>
<button class="run" aria-label="App"></button><button class="run" aria-label="App"></button>
<button class="alert" aria-label="Slack"><svg class="s30"><use href="#slack"/></svg></button>
<button class="active" aria-label="KiCad"><b class="ki">Ki</b></button>
<div class="tray">
<svg viewBox="0 0 20 20"><path d="M4 13l6-6 6 6" stroke-width="1.500"/></svg>
<svg class="cloud" viewBox="0 0 20 20"><path d="M5 17a5 5 0 0 1-1-10c1-6 9-6 11 0 6 1 6 10 1 10z" fill="url(#g-cloud)"/></svg>
<svg class="cloud" viewBox="0 0 20 20"><path d="M3 9a7 7 0 0 1 13-3l1-4M16 6h-4M2 18v-5h4M2 13l4 5 4 0" fill="none" stroke="#222"/><circle cx="15" cy="14" r="5" fill="#f79c1d"/></svg>
<svg viewBox="0 0 20 20"><path d="M1 8c5-6 13-6 18 0M4 11c3-4 9-4 12 0M7 14c1-2 5-2 6 0" stroke-width="1.500"/><circle cx="10" cy="16" r="1"/></svg>
<svg viewBox="0 0 20 20"><path d="M2 8h3l4-4v12l-4-4H2zM13 7l6 6M19 7l-6 6"/></svg>
<svg viewBox="0 0 20 20"><path d="M2 6h14v9H2zM18 9v4" fill="#222" stroke-width="2"/><path d="M4 1L2 6h4l-2 5" stroke="#d9d9d9" stroke-width="3"/><path d="M4 1L2 6h4l-2 5" stroke-width="1.500"/></svg>
<time>12.40<br>26/02/2026</time>
</div>
</div>

<div class="dialog" role="dialog" aria-label="Board Setup">
<div class="dtitle"><span>Board Setup</span><button aria-label="Close"><svg viewBox="0 0 14 14"><path d="M1 1l12 12M13 1L1 13"/></svg></button></div>
<div class="dbody">
<ul class="tree">
<li><div><button aria-label="Collapse"></button>Board Stackup</div><ul><li>Board Editor Layers</li><li>Physical Stackup</li><li>Board Finish</li><li>Solder Mask/Paste</li></ul></li>
<li><div><button aria-label="Collapse"></button>Text &amp; Graphics</div><ul><li>Defaults</li><li>Formatting</li><li>Text Variables</li></ul></li>
<li><div><button aria-label="Collapse"></button>Design Rules</div><ul><li>Constraints</li><li><mark>Pre-defined Sizes</mark></li><li>Teardrops</li><li>Length-tuning Patterns</li><li>Net Classes</li><li>Custom Rules</li><li>Violation Severity</li></ul></li>
<li><div><button aria-label="Collapse"></button>Board Data</div><ul><li>Embedded Files</li></ul></li>
</ul>
<div class="sizes">
<section><h3>Tracks</h3><div class="list"><table><thead><tr><th>Width</th></tr></thead></table></div><div class="btns"><button aria-label="Add"><svg><use href="#plus"/></svg></button><button aria-label="Sort"><svg><use href="#sort"/></svg></button><button class="del" aria-label="Delete"><svg><use href="#trash"/></svg></button></div></section>
<section><h3>Vias</h3><div class="list"><table><thead><tr><th>Diameter</th><th>Hole</th></tr></thead></table></div><div class="btns"><button aria-label="Add"><svg><use href="#plus"/></svg></button><button aria-label="Sort"><svg><use href="#sort"/></svg></button><button class="del" aria-label="Delete"><svg><use href="#trash"/></svg></button></div></section>
<section><h3>Differential Pairs</h3><div class="list"><table><thead><tr><th>Width</th><th>Gap</th><th>Via Gap</th></tr></thead></table></div><div class="btns"><button aria-label="Add"><svg><use href="#plus"/></svg></button><button aria-label="Sort"><svg><use href="#sort"/></svg></button><button class="del" aria-label="Delete"><svg><use href="#trash"/></svg></button></div></section>
</div>
</div>
<div class="dfoot"><button class="imp">Import Settings from Another Board...</button><button class="ok">OK</button><button>Cancel</button></div>
<svg class="grip" viewBox="0 0 12 12"><path d="M9 1h3M9 5h3M5 5h3M9 9h3M5 9h3M1 9h3" stroke="#bbb" stroke-width="3"/></svg>
</div>
</body>
</html>
```
FILE: styles.css
```css
*{box-sizing:border-box}
html,body{height:100%}
body{margin:0;display:flex;flex-direction:column;position:relative;overflow:hidden;background:#f0f0f0;color:#000;font:14px/20px "Noto Sans","Open Sans",sans-serif;white-space:nowrap}
button,select,input{font:inherit;color:inherit;margin:0;padding:0;border:0;background:none}
h1,h2,h3,ul{margin:0;padding:0;font-weight:400;list-style:none}
svg{display:block;flex:none}
.sprite{position:absolute;width:0;height:0}

/* Title bar and menu */
.titlebar{display:flex;align-items:center;height:29px;padding:0 2px;background:#f3f3f3;color:#8a8a8a;flex:none}
.titlebar h1{font-size:14px;line-height:20px;margin-left:7px}
.i20{width:20px;height:20px}
.winctl{margin-left:auto;display:flex}
.winctl button{width:58px;display:grid;place-items:center}
.winctl button:last-child{width:60px}
.winctl svg{width:14px;height:14px;fill:none;stroke:#707070}
.menu{display:flex;gap:18px;height:23px;padding:2px 0 0 10px;background:#fff;color:#666;flex:none}

/* Toolbars */
.bar{display:flex;align-items:center;flex:none;padding-left:4px}
.bar i{width:9px;height:34px;flex:none;background:linear-gradient(#8c8c8c,#8c8c8c) 4px 0/1px 100% no-repeat}
.tools{height:48px}
.tools button{width:41px;height:41px;display:grid;place-items:center;flex:none}
.tools svg{width:30px;height:30px}
.dis{opacity:.35}
.flipx svg{transform:scaleX(-1)}
.options{height:42px;padding:0 0 2px 6px}
.options .on{width:38px;height:38px;margin-left:3px}
.options i{margin:0 2px 0 1px}
.options svg{width:30px;height:30px}
.on{background:#b3d7f3;border:1px solid #0078d7;display:grid;place-items:center}
.pair{margin:0 4px 0 7px}
.combo{display:grid;align-items:center;height:28px;background:#fdfdfd;border:1px solid #d0d0d0;border-bottom-color:#b4b4b4;border-radius:3px}
.combo select{grid-area:1/1;appearance:none;height:26px;padding-left:3px;width:100%;outline:0}
.combo svg{grid-area:1/1;width:12px;height:12px;justify-self:end;margin-right:4px;pointer-events:none}
.layer{border-color:#868686;height:26px}
.layer select{height:24px}
.layer b{grid-area:1/1;width:14px;height:14px;margin-left:7px;background:#c83434;border:1px solid #000}
.layer select{padding-left:27px}
.w-track{width:193px}.w-via{width:186px}.w-layer{width:159px}.w-grid{width:210px}.w-zoom{width:120px}

/* Side tools and canvas */
main{flex:1;min-height:0;display:flex}
.side{width:44px;padding:6px 0 0 3px;flex:none;display:flex;flex-direction:column;gap:3px}
.right{width:45px;padding-left:4px}
.side button{width:38px;height:38px;display:grid;place-items:center;flex:none}
.side svg{width:30px;height:30px}
.side i{width:34px;height:6px;margin-left:2px;flex:none;background:linear-gradient(#8c8c8c,#8c8c8c) 0 2px/100% 1px no-repeat}
.side .unit{font:16px/14px "Noto Sans",sans-serif;color:#545454;-webkit-text-stroke:.5px #545454;align-content:center;gap:2px}
.side .unit svg{height:8px}
.right .more{background:linear-gradient(135deg,transparent 50%,#000 50%) 100% 100%/9px 9px no-repeat}
.board{flex:1;min-width:0;height:100%;border-top:1px solid #a0a0a0;border-left:1px solid #a0a0a0}
.fab{font:98px "Noto Sans CJK JP",sans-serif;fill:#afafaf;stroke:#afafaf;stroke-width:2;stroke-linejoin:round}
.mono{font-family:"DejaVu Sans Mono",monospace;stroke-width:0}
.net{font:10px "Liberation Mono",monospace;fill:#eab6b6;text-anchor:middle}
.pad{font:53px "Noto Sans CJK JP",sans-serif;fill:#f6dede;text-anchor:middle}

/* Appearance panel */
aside{width:255px;flex:none;border-left:5px solid #dcdcdc;display:flex;flex-direction:column;font-size:12px;overflow:hidden}
h2{height:26px;padding-left:4px;background:#bababa;font-size:14px;line-height:25px;color:#222;flex:none}
.second{border-top:5px solid #dcdcdc;height:31px;margin-top:6px}
.tabs{display:flex;align-items:flex-end;padding-top:6px;font-size:14px}
.tabs button{height:25px;width:60px;border:1px solid #e2e2e2;border-bottom:0;border-left:0;text-align:left;padding-left:5px}
.tabs .cur{width:63px;height:27px;background:#f9f9f9;padding-left:8px}
.book{background:#f9f9f9;border:1px solid #e2e2e2;margin-right:2px;padding:1px 6px 2px 3px;flex:none;display:flex;flex-direction:column}
.scroller{display:flex;margin-right:-6px}
.layers{width:221px;background:#f0f0f0}
.layers li{height:20px;display:flex;align-items:center;padding-left:19px}
.layers li span{width:16px;height:15px;margin-right:6px}
.layers svg{width:16px;height:16px;margin-right:5px}
.sel{background:#e1e1e1}
.sel::before{content:"";border:5px solid transparent;border-left:6px solid #3b3bff;border-right:0;margin:0 6px 2px -12px}
.chk{background-image:conic-gradient(rgba(0,0,0,.04) 25%,transparent 0 50%,rgba(0,0,0,.04) 0 75%,transparent 0);background-size:12px 12px}
.strong{background-image:conic-gradient(rgba(0,0,0,.2) 25%,transparent 0 50%,rgba(0,0,0,.2) 0 75%,transparent 0)}
.track{flex:1;background:#f0f0f0;margin-left:1px;padding:21px 0 0 8px}
.thumb{width:3px;height:358px;border-radius:2px;background:#868686}
.ldo{height:22px;margin:5px 0 0 5px;background:#fff;color:#6d6d6d;font-size:12px;text-align:left;padding:0 0 2px 7px;display:flex;align-items:center}
.ldo::before{content:"";border:4px solid transparent;border-left:5px solid #555;border-right:0;margin-right:4px}
.presets{padding:12px 7px 0;display:flex;flex-direction:column}
.presets label{line-height:20px}
.presets select{font-size:14px}
.presets .combo+label{margin-top:4px}
.filter{display:grid;grid-template-columns:105px 1fr;padding:5px 0 0 5px}
.filter label{display:flex;align-items:center;gap:3px;height:20px}
.filter input{appearance:none;width:16px;height:16px;border:1px solid #666;border-radius:3px;background:#f6f6f6}
.filter input:checked{border-color:#005fb8;background:#005fb8 url("data:image/svg+xml,%3Csvg xmlns='http://www.w3.org/2000/svg' viewBox='0 0 14 14'%3E%3Cpath d='M3 7l3 3 5-6' fill='none' stroke='white'/%3E%3C/svg%3E")}

/* Info and status rows */
.info{height:41px;flex:none;display:grid;grid-template-columns:333px 111px 110px 95px 153px 599px 1fr;padding:0 0 0 14px;border-top:1px solid #a0a0a0;color:#6d6d6d;overflow:hidden}
.info div{overflow:hidden;line-height:20px;height:40px}
.status{height:29px;flex:none;display:grid;grid-template-columns:584px 97px 203px 321px 234px 77px 215px 1fr;align-items:center;border-top:1px solid #d4d4d4;border-bottom:1px solid #a0a0a0;margin-top:-1px}
.status span{padding:0 4px;height:24px;line-height:24px;border-right:1px solid #d4d4d4;overflow:hidden;text-overflow:ellipsis}
.status span:first-child{padding:0 2px}

/* Taskbar */
.taskbar{height:60px;flex:none;display:flex;align-items:center;padding-left:300px;background:#d9d9d9}
.taskbar>button,.taskbar>span{width:55px;height:60px;flex:none;display:grid;place-items:center;position:relative}
.s30{width:30px;height:30px}
.s38{width:38px;height:38px;margin-top:-8px}
.search{display:flex;align-items:center;width:272px;height:38px;margin:0 5px;border-radius:19px;background:#f3f3f3;border:1px solid #c4c4c4;padding-left:12px;overflow:hidden;font-size:16px}
.search svg{width:20px;height:20px;fill:none;stroke:#222;stroke-width:2}
.search input{flex:1;min-width:0;margin-left:12px;outline:0}
.search input::placeholder{color:#5c5c5c;opacity:1}
.search .pic{width:62px;height:24px;stroke:none;margin-top:10px}
.run::after,.alert::after,.active::after{content:"";position:absolute;bottom:5px;left:24px;width:7px;height:5px;border-radius:3px;background:#777}
.taskbar .alert::after{left:8px;width:40px;background:#c42b1c}
.taskbar .active::after{left:18px;width:20px;background:#0078d4}
.alert{background:linear-gradient(#e8a9a5,#e8a9a5) center/49px 49px no-repeat}
.active{background:linear-gradient(#f0f0f0,#f0f0f0) center/47px 49px no-repeat}
.fus svg,.fus b,.fus small{grid-area:1/1}
.fus b{color:#fff;font-size:16px;margin-bottom:10px}
.fus small{color:#fff;font-size:7px;margin-top:22px;line-height:8px;font-weight:700}
.ki{width:28px;height:29px;border-radius:3px;background:#2e41c4;color:#fff;font:700 20px/28px "Open Sans",sans-serif}
.tray{margin-left:auto;display:flex;align-items:center;padding-right:24px}
.tray svg{width:20px;height:20px;margin-right:20px;fill:none;stroke:#222;stroke-width:1}
.tray svg:nth-of-type(n+4){margin-right:10px}
.tray .cloud{stroke:none}
.tray time{width:88px;text-align:right;line-height:20px}

/* Board Setup window */
.dialog{position:absolute;left:438px;top:198px;width:1044px;display:flex;flex-direction:column;border-radius:8px;overflow:hidden;background:#f0f0f0;box-shadow:0 0 0 1px #35404c,0 10px 36px 8px rgba(0,0,0,.5)}
.dtitle{height:37px;display:flex;align-items:center;padding:0 14px 0 9px;background:linear-gradient(90deg,#eef4f9,#f0f3f9)}
.dtitle button{margin-left:auto}
.dtitle svg{width:14px;height:14px;fill:none;stroke:#111}
.dbody{display:flex;height:539px;border-bottom:1px solid #dfdfdf}
.tree{width:205px;flex:none;background:#fff repeating-linear-gradient(#808080 0 1px,transparent 1px 2px) 15px 12px/1px 374px no-repeat;padding:1px 0 0 10px;line-height:22px}
.tree div{display:flex;align-items:center;height:22px;background:repeating-linear-gradient(90deg,#808080 0 1px,transparent 1px 2px) 12px 11px/6px 1px no-repeat}
.tree button{width:11px;height:11px;margin-right:8px;border:1px solid #8c8c8c;border-radius:1px;background:linear-gradient(#3c5aa8,#3c5aa8) center/7px 1px no-repeat,linear-gradient(#fff,#e2e2e2)}
.tree ul{padding-left:29px}
.tree ul li{display:flex;height:22px}
.tree ul li::before{content:"";width:11px;height:22px;margin-right:3px;flex:none;background:repeating-linear-gradient(#808080 0 1px,transparent 1px 2px) 0 0/1px 100% no-repeat,repeating-linear-gradient(90deg,#808080 0 1px,transparent 1px 2px) 0 11px/100% 1px no-repeat}
.tree ul li:last-child::before{background-size:1px 11px,100% 1px}
.tree mark{background:#0078d7;color:#fff;outline:1px dotted #e08030;outline-offset:-1px;margin-left:-2px;padding:0 2px}
.sizes{flex:1;display:grid;grid-template-columns:124px 263px 1fr;gap:15px;padding:0 5px 0 10px}
.sizes section{display:flex;flex-direction:column}
h3{font-size:14px;line-height:31px}
.list{flex:1;background:linear-gradient(#f0f0f0,#f0f0f0) 0 0/100% 26px no-repeat,#fff}
table{border-collapse:collapse;table-layout:fixed}
th{width:109px;height:26px;padding:0;font-weight:400;border-top:1px solid #cfcfcf;border-right:1px solid #cfcfcf}
th:first-child{text-align:left;padding-left:3px}
.btns{height:40px;padding:7px 0 0 1px;display:flex;gap:11px}
.btns button,.dfoot button{height:27px;background:#fdfdfd;border:1px solid #d0d0d0;border-bottom-color:#b8b8b8;border-radius:4px}
.btns button{width:27px;display:grid;place-items:center}
.btns svg{width:16px;height:16px}
.btns .del{margin-left:20px}
.dfoot{height:38px;display:flex;gap:10px;padding:6px 10px 0 11px}
.dfoot button{width:91px}
.dfoot .imp{width:273px;margin-right:auto}
.dfoot .ok{border-color:#0067c0}
.grip{position:absolute;right:1px;bottom:1px;width:12px;height:12px}
```
